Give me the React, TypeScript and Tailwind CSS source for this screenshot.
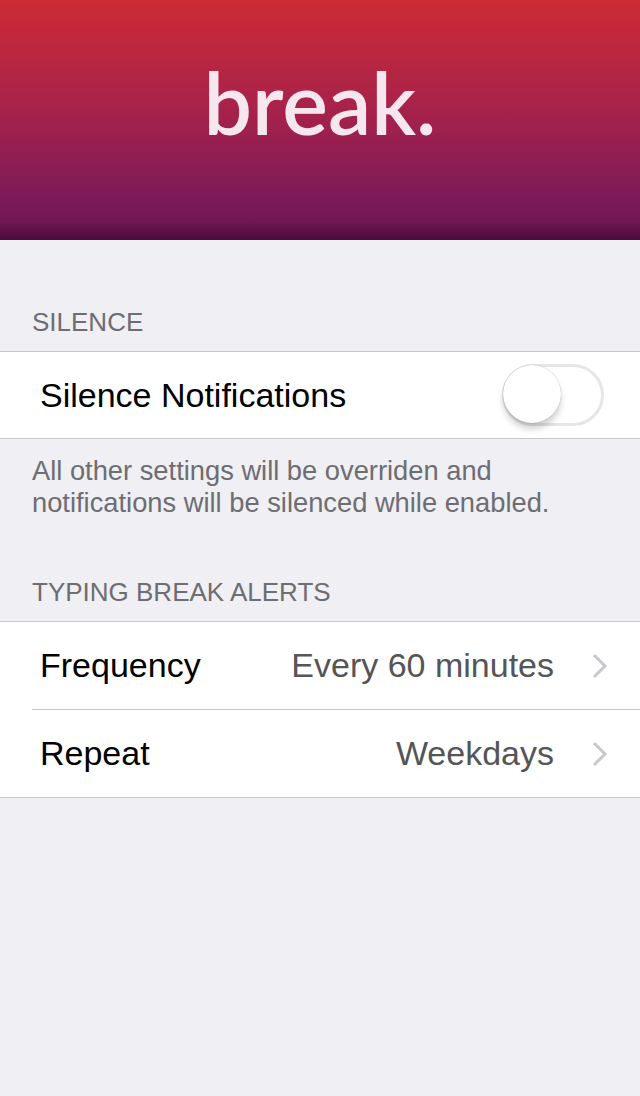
import React from "react";

function Chevron() {
  return (
    <svg width="16" height="26" viewBox="0 0 16 26" className="shrink-0">
      <path d="M2 2 L13 13 L2 24" fill="none" stroke="#c7c7cc" strokeWidth="3" />
    </svg>
  );
}

export default function App() {
  return (
    <div
      className="w-[640px] h-[1096px] bg-[#efeff4] flex flex-col"
      style={{ fontFamily: '"Liberation Sans", Arial, sans-serif' }}
    >
      <div className="relative h-[240px] shrink-0 bg-[linear-gradient(to_bottom,#cd2b35_0%,#a8224a_45%,#7a1a58_85%,#711755_92%,#4a0d3c_100%)] flex justify-center">
        <div
          className="mt-[52px] text-[86px] leading-[100px] font-semibold text-[#f6e7ee]"
          style={{ fontFamily: 'Lato, "Open Sans", sans-serif' }}
        >
          break.
        </div>
      </div>

      <div className="h-[111px] shrink-0 px-[32px] flex items-end pb-[14px] text-[26px] leading-[30px] text-[#6d6d72]">
        SILENCE
      </div>
      <div className="bg-white border-y border-[#c8c7cc] h-[88px] shrink-0 flex items-center pl-[40px] pr-[36px]">
        <div className="flex-1 text-[34px] text-black">Silence Notifications</div>
        <div className="relative w-[102px] h-[62px] rounded-full border-[3px] border-[#e5e5ea] bg-white">
          <div className="absolute left-[-2px] top-[-2px] w-[58px] h-[58px] rounded-full bg-white shadow-[0_6px_6px_rgba(0,0,0,0.18),0_0_1px_rgba(0,0,0,0.35)]" />
        </div>
      </div>
      <div className="px-[32px] pt-[16px] text-[27.3px] leading-[32px] text-[#6d6d72]">
        All other settings will be overriden and
        <br />
        notifications will be silenced while enabled.
      </div>
      <div className="h-[102px] shrink-0 px-[32px] flex items-end pb-[14px] text-[26px] leading-[30px] text-[#6d6d72]">
        TYPING BREAK ALERTS
      </div>
      <div className="bg-white border-y border-[#c8c7cc] shrink-0">
        <div className="h-[87px] flex items-center pl-[40px] pr-[32px]">
          <div className="flex-1 text-[34px] text-black">Frequency</div>
          <div className="text-[34px] text-[#555558] mr-[38px]">Every 60 minutes</div>
          <Chevron />
        </div>
        <div className="ml-[32px] h-px bg-[#c8c7cc]" />
        <div className="h-[87px] flex items-center pl-[40px] pr-[32px]">
          <div className="flex-1 text-[34px] text-black">Repeat</div>
          <div className="text-[34px] text-[#555558] mr-[38px]">Weekdays</div>
          <Chevron />
        </div>
      </div>
    </div>
  );
}
